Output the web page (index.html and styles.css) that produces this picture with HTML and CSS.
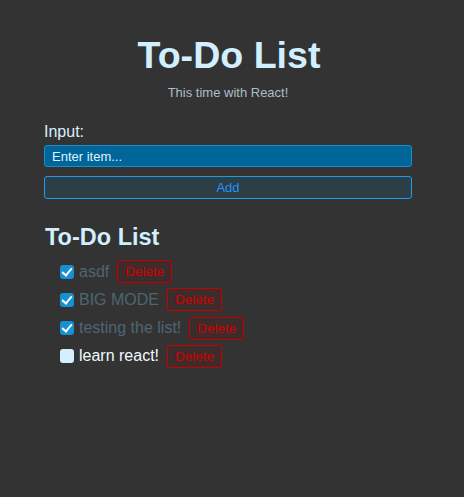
FILE: index.html
```html
<!DOCTYPE html>
<html lang="en">
<head>
<meta charset="utf-8">
<title>To-Do List</title>
<link rel="stylesheet" href="styles.css">
</head>
<body>
<div class="app">
  <h1 class="title">To-Do List</h1>
  <p class="subtitle">This time with React!</p>
  <form class="entry">
    <label class="label" for="item">Input:</label>
    <input class="field" id="item" type="text" placeholder="Enter item...">
    <button class="add" type="button">Add</button>
  </form>
  <h2 class="list-title">To-Do List</h2>
  <ul class="todos">
    <li class="todo done"><input class="check" type="checkbox" checked><span class="text">asdf</span><button class="delete" type="button">Delete</button></li>
    <li class="todo done"><input class="check" type="checkbox" checked><span class="text">BIG MODE</span><button class="delete" type="button">Delete</button></li>
    <li class="todo done"><input class="check" type="checkbox" checked><span class="text">testing the list!</span><button class="delete" type="button">Delete</button></li>
    <li class="todo"><input class="check" type="checkbox"><span class="text">learn react!</span><button class="delete" type="button">Delete</button></li>
  </ul>
</div>
</body>
</html>
```
FILE: styles.css
```css
html, body {
  margin: 0;
  padding: 0;
  background: #333333;
  font-family: "Liberation Sans", Arial, sans-serif;
}
.app {
  width: 368px;
  margin-left: 44px;
  padding-top: 34px;
  display: flex;
  flex-direction: column;
}
.title {
  margin: 0;
  padding-left: 2px;
  font-size: 37.6px;
  line-height: 42px;
  font-weight: bold;
  color: #d2efff;
  text-align: center;
}
.subtitle {
  margin: 9px 0 0;
  font-size: 13px;
  line-height: 15px;
  color: #a9bfcc;
  text-align: center;
}
.entry {
  margin-top: 23px;
  display: flex;
  flex-direction: column;
}
.label {
  font-size: 16px;
  line-height: 18px;
  color: #dcefff;
}
.field {
  margin-top: 4px;
  box-sizing: border-box;
  width: 100%;
  height: 22px;
  padding: 0 7px;
  background: #006699;
  border: 1px solid #1b8ccc;
  border-radius: 3px;
  color: #e6f6ff;
  font-family: inherit;
  font-size: 13px;
  outline: none;
}
.field::placeholder {
  color: #dff3ff;
  opacity: 1;
}
.add {
  margin-top: 9px;
  box-sizing: border-box;
  width: 100%;
  height: 23px;
  padding: 0;
  background: #2d3e47;
  border: 1px solid #1a9ee8;
  border-radius: 3px;
  color: #1e94ff;
  font-family: inherit;
  font-size: 13px;
}
.list-title {
  margin: 25px 0 0 1px;
  font-size: 23.5px;
  line-height: 27px;
  font-weight: bold;
  color: #d2efff;
}
.todos {
  list-style: none;
  margin: 9px 0 0;
  padding: 0 0 0 16px;
  display: flex;
  flex-direction: column;
  gap: 5.33px;
}
.todo {
  display: flex;
  align-items: center;
  height: 23px;
}
.check {
  appearance: none;
  -webkit-appearance: none;
  position: relative;
  margin: 0 5px 0 0;
  width: 14px;
  height: 14px;
  border-radius: 3px;
  background: #d4efff;
  flex: none;
}
.check:checked {
  background: #1590d2;
}
.check:checked::after {
  content: "";
  position: absolute;
  left: 4px;
  top: 1px;
  width: 4px;
  height: 8px;
  border: solid #ffffff;
  border-width: 0 2.5px 2.5px 0;
  transform: rotate(40deg);
}
.text {
  font-size: 16px;
  line-height: 18px;
  color: #f2f9ff;
}
.done .text {
  color: #4e6672;
}
.delete {
  margin-left: 8px;
  box-sizing: border-box;
  height: 23px;
  padding: 0 7px;
  background: #3e2c2c;
  border: 1px solid #c80000;
  border-radius: 3px;
  color: #d00000;
  font-family: inherit;
  font-size: 13.5px;
}
```
